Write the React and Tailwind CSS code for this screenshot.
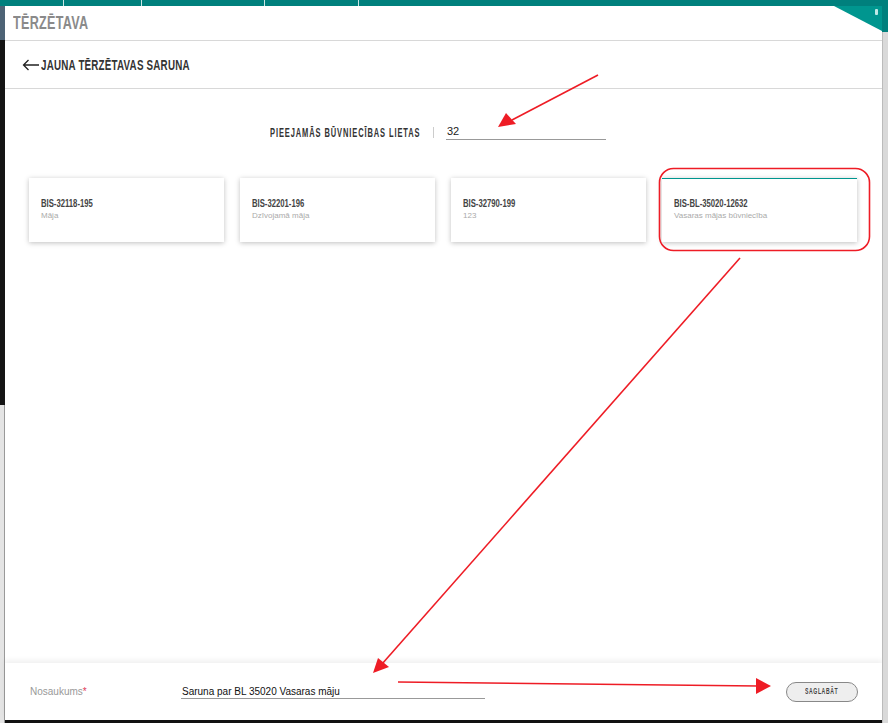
import React from "react";

const cards = [
  { code: "BIS-32118-195", name: "Māja" },
  { code: "BIS-32201-196", name: "Dzīvojamā māja" },
  { code: "BIS-32790-199", name: "123" },
  { code: "BIS-BL-35020-12632", name: "Vasaras mājas būvniecība", active: true },
];

function Arrows() {
  return (
    <svg className="absolute inset-0 pointer-events-none" width="888" height="723">
      <g stroke="#ee1c25" strokeWidth="1.6" fill="none">
        <line x1="598" y1="75" x2="512" y2="120" />
        <line x1="740" y1="258" x2="382" y2="664" />
        <line x1="398" y1="682" x2="758" y2="686" />
        <rect x="659.5" y="168.5" width="210" height="82" rx="14" />
      </g>
      <g fill="#ee1c25">
        <path d="M498 127 L506 113 L516 124 z" />
        <path d="M373 673 L378 658 L389 667 z" />
        <path d="M771 686 L756 678 L756 694 z" />
      </g>
    </svg>
  );
}

export default function App() {
  return (
    <div className="relative w-[888px] h-[723px] overflow-hidden bg-white flex" style={{ fontFamily: '"Liberation Sans",Arial,sans-serif' }}>
      <div className="w-[5px] flex flex-col shrink-0">
        <div className="h-[6px] bg-[#00807d]" />
        <div className="h-[34px] bg-[#4d6375]" />
        <div className="h-[365px] bg-[#141414]" />
        <div className="flex-1 bg-[#e4e4e4] border-r border-[#999]" />
      </div>
      <div className="flex-1 flex flex-col relative">
        <div className="h-[6px] bg-[#00807d] flex">
          <div className="w-[59px] border-r border-white/80" />
          <div className="w-[78px] border-r border-white/80" />
          <div className="w-[123px] border-r border-white/80" />
          <div className="w-[94px] border-r border-white/80" />
          <div className="flex-1" />
        </div>
        <div className="flex-1 flex">
          <div className="flex-1 flex flex-col bg-white">
            <div className="h-[35px] border-b border-[#d8d8d8] flex items-center px-[8px] relative">
              <span className="inline-block origin-left scale-x-[0.7] whitespace-nowrap text-[18px] font-bold text-[#8a8a8a] tracking-[0.4px] leading-none">TĒRZĒTAVA</span>
              <div className="absolute right-0 top-0 w-[48px] h-[25px] bg-[#00968f]" style={{ clipPath: "polygon(0 0,100% 0,100% 100%)" }}>
                <span className="absolute right-[4px] top-[3px] w-[3px] h-[6px] bg-[#bfe9e6] rounded-[1px]" />
              </div>
            </div>
            <div className="h-[48px] border-b border-[#d8d8d8] flex items-center pl-[17px]">
              <svg width="18" height="12" viewBox="0 0 18 12" className="mr-[1px] shrink-0">
                <path d="M17 6 H1.5 M6.5 1 L1.5 6 L6.5 11" stroke="#222" strokeWidth="1.3" fill="none" />
              </svg>
              <span className="inline-block origin-left scale-x-[0.7] whitespace-nowrap text-[14px] font-bold text-[#333] tracking-[0.3px] leading-none">JAUNA TĒRZĒTAVAS SARUNA</span>
            </div>
            <div className="flex-1 flex flex-col">
              <div className="flex items-center mt-[31px] pl-[265px]">
                <div className="w-[163px]">
                  <span className="inline-block origin-left scale-x-[0.6] whitespace-nowrap text-[12.5px] font-bold text-[#333] tracking-[1.5px] leading-none">PIEEJAMĀS BŪVNIECĪBAS LIETAS</span>
                </div>
                <span className="w-px h-[11px] bg-[#ccc]" />
                <div className="ml-[12px] w-[160px] border-b border-[#999] text-[11px] text-[#222] pb-[1px] pl-[1px] leading-[14px]">32</div>
              </div>
              <div className="flex gap-[16px] pl-[24px] mt-[34px]">
                {cards.map((c) => (
                  <div key={c.code} className="w-[195px] h-[64px] bg-white shadow-[0_1px_5px_rgba(0,0,0,0.25)] flex flex-col">
                    <div className={c.active ? "h-px bg-[#00968f]" : "h-px"} />
                    <div className="flex-1 flex flex-col justify-center px-[12px] pb-[3px]">
                      <span className="inline-block origin-left scale-x-[0.7] whitespace-nowrap text-[11px] font-bold text-[#444] leading-[13px]">{c.code}</span>
                      <span className="text-[8px] text-[#aaa] leading-[11px]">{c.name}</span>
                    </div>
                  </div>
                ))}
              </div>
            </div>
            <div className="h-[57px] bg-white shadow-[0_-3px_5px_rgba(0,0,0,0.06)] flex items-center pl-[25px] pr-[24px]">
              <span className="text-[10px] text-[#999] w-[151px]">Nosaukums<span className="text-[#e03a5a]">*</span></span>
              <div className="w-[304px] border-b border-[#999] text-[10px] text-[#111] pl-[1px] leading-[13px]">Saruna par BL 35020 Vasaras māju</div>
              <div className="flex-1" />
              <button className="w-[72px] h-[20px] rounded-full border border-[#888] bg-[#eeeeee] flex items-center justify-center">
                <span className="inline-block scale-x-[0.6] whitespace-nowrap text-[8.5px] font-bold text-[#444] tracking-[1px] leading-none">SAGLABĀT</span>
              </button>
            </div>
            <div className="h-[3px] bg-[#111]" />
          </div>
          <div className="w-[6px] flex flex-col">
            <div className="h-[26px] bg-[#00807d]" />
            <div className="flex-1 bg-[#d9d9d9] border-l border-[#bbb]" />
          </div>
        </div>
      </div>
      <Arrows />
    </div>
  );
}
